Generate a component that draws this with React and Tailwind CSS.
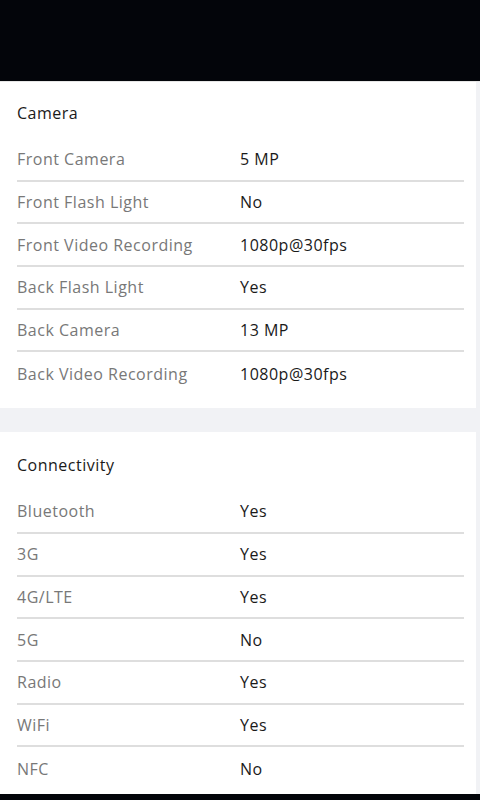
import React from "react";

const camera = [
  ["Front Camera", "5 MP"],
  ["Front Flash Light", "No"],
  ["Front Video Recording", "1080p@30fps"],
  ["Back Flash Light", "Yes"],
  ["Back Camera", "13 MP"],
  ["Back Video Recording", "1080p@30fps"],
];

const connectivity = [
  ["Bluetooth", "Yes"],
  ["3G", "Yes"],
  ["4G/LTE", "Yes"],
  ["5G", "No"],
  ["Radio", "Yes"],
  ["WiFi", "Yes"],
  ["NFC", "No"],
];

const SpecRow = ({ label, value, last }) => (
  <div
    className={`flex items-center h-[42.7px] ${
      last ? "" : "border-b-2 border-[#dedede]"
    }`}
  >
    <div className="w-[223px] text-[#787878]">{label}</div>
    <div className="text-[#1a1a1a] font-medium">{value}</div>
  </div>
);

const SpecCard = ({ title, rows, className }) => (
  <div className={`bg-white mr-[4px] pl-[17px] pr-[12px] ${className}`}>
    <h2 className="h-[24px] leading-[24px] text-[#1a1a1a] font-medium mt-[1px] mb-[14px]">
      {title}
    </h2>
    {rows.map(([label, value], i) => (
      <SpecRow
        key={label}
        label={label}
        value={value}
        last={i === rows.length - 1}
      />
    ))}
  </div>
);

export default function App() {
  return (
    <div
      className="h-[800px] overflow-hidden bg-[#f1f2f5] text-[16px] tracking-[0.5px] flex flex-col"
      style={{ fontFamily: '"Open Sans", "Noto Sans", sans-serif' }}
    >
      <div className="h-[82px] bg-[#03050a] border-b border-[#e6e6e6] shrink-0" />
      <SpecCard title="Camera" rows={camera} className="pt-[18px] pb-[13px]" />
      <div className="h-[24px] shrink-0" />
      <SpecCard
        title="Connectivity"
        rows={connectivity}
        className="pt-[20px] pb-[4px]"
      />
      <div className="flex-1 bg-[#03050a]" />
    </div>
  );
}
